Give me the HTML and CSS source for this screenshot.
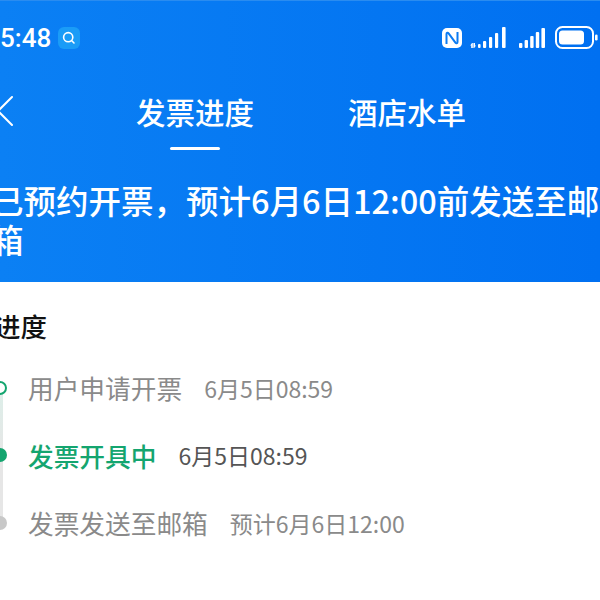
FILE: index.html
```html
<!DOCTYPE html>
<html lang="zh-CN">
<head>
    <meta charset="UTF-8">
    <title>发票进度</title>
    <link rel="stylesheet" href="styles.css">
</head>
<body>
    <div class="screen">
        <div class="header">
            <div class="statusbar">
                <div class="status-left">
                    <span class="clock">5:48</span>
                    <span class="search-badge">
                        <svg width="16" height="16" viewBox="0 0 16 16" fill="none" stroke="#fff" stroke-width="1.6" stroke-linecap="round">
                            <circle cx="7.2" cy="7.2" r="4.6"/>
                            <path d="M10.8 10.8L13 13"/>
                        </svg>
                    </span>
                </div>
                <div class="status-right">
                    <svg class="nfc" width="20" height="20" viewBox="0 0 20 20">
                        <rect x="0" y="0" width="20" height="20" rx="5" fill="#fff"/>
                        <path d="M4.5 16V6C4.5 4.6 5.8 4.4 6.6 5.4L13.4 14.6C14.2 15.6 15.5 15.4 15.5 14V4" fill="none" stroke="#0a7af2" stroke-width="2"/>
                    </svg>
                    <svg class="signal" width="37" height="24" viewBox="0 0 37 24" fill="#fff">
                        <path d="M2 17L0.2 19.5H1.2V22H2.8V17Z"/>
                        <path d="M4.2 22L6 19.5H5V17H3.4V22Z"/>
                        <rect x="8" y="18" width="2.6" height="4" rx="1"/>
                        <rect x="13" y="15" width="3.2" height="7" rx="1"/>
                        <rect x="19" y="11" width="3.2" height="11" rx="1"/>
                        <rect x="25" y="7" width="3.2" height="15" rx="1"/>
                        <rect x="32" y="1" width="3.6" height="21" rx="1"/>
                    </svg>
                    <svg class="signal signal-main" width="26" height="24" viewBox="0 0 26 24" fill="#fff">
                        <rect x="0" y="17" width="3.4" height="5" rx="1"/>
                        <rect x="5.6" y="14" width="3.4" height="8" rx="1"/>
                        <rect x="11.2" y="10" width="3.4" height="12" rx="1"/>
                        <rect x="16.8" y="6" width="3.4" height="16" rx="1"/>
                        <rect x="22.4" y="2" width="3.6" height="20" rx="1"/>
                    </svg>
                    <svg class="battery" width="44" height="24" viewBox="0 0 44 24">
                        <rect x="2" y="1" width="37" height="21" rx="6.5" fill="none" stroke="#fff" stroke-width="2"/>
                        <rect x="5" y="4.5" width="25" height="14" rx="3.5" fill="#fff"/>
                        <rect x="41" y="8.5" width="2.6" height="6" rx="1.3" fill="#fff"/>
                    </svg>
                </div>
            </div>

            <div class="navbar">
                <svg class="back" width="16" height="32" viewBox="0 0 16 32" fill="none" stroke="#fff" stroke-width="2" stroke-linecap="round" stroke-linejoin="round">
                    <path d="M12 2L-2 16L12 30"/>
                </svg>
                <div class="tabs">
                    <div class="tab active">发票进度</div>
                    <div class="tab">酒店水单</div>
                </div>
            </div>

            <div class="notice">已预约开票，预计6月6日12:00前发送至邮箱</div>
        </div>

        <div class="content">
            <h3 class="title">进度</h3>
            <div class="timeline">
                <div class="step done">
                    <span class="dot"></span>
                    <span class="step-name">用户申请开票</span>
                    <span class="step-time">6月5日08:59</span>
                </div>
                <div class="step current">
                    <span class="dot"></span>
                    <span class="step-name">发票开具中</span>
                    <span class="step-time">6月5日08:59</span>
                </div>
                <div class="step todo">
                    <span class="dot"></span>
                    <span class="step-name">发票发送至邮箱</span>
                    <span class="step-time">预计6月6日12:00</span>
                </div>
            </div>
        </div>
    </div>
</body>
</html>
```

FILE: styles.css
```css
html, body {
    margin: 0;
    padding: 0;
    width: 600px;
    height: 600px;
    overflow: hidden;
    background-color: white;
}
body {
    font-family: "Noto Sans CJK SC", "Noto Sans", sans-serif;
}
.screen {
    width: 600px;
    overflow: hidden;
}
.header {
    height: 282px;
    color: white;
    background: linear-gradient(90deg, #0b80f4, #0070f1);
    border-top: 1px solid #2a8cf0;
    box-sizing: border-box;
}
.statusbar {
    height: 74px;
    display: flex;
    justify-content: space-between;
    align-items: center;
}
.status-left {
    display: flex;
    align-items: center;
    gap: 7px;
}
.clock {
    font-family: "Roboto", sans-serif;
    font-size: 26px;
    font-weight: 500;
    line-height: 30px;
}
.search-badge {
    width: 22px;
    height: 22px;
    border-radius: 6px;
    background-color: #1a9cf7;
    display: flex;
    align-items: center;
    justify-content: center;
}
.status-right {
    display: flex;
    align-items: center;
    gap: 8px;
    margin-right: 2px;
}
.signal-main {
    margin-left: 4px;
}
.battery {
    margin-left: 1px;
}
.navbar {
    height: 76px;
    display: flex;
    align-items: center;
}
.back {
    flex-shrink: 0;
    margin-top: -4px;
}
.tabs {
    display: flex;
    gap: 95px;
    margin-left: 120px;
}
.tab {
    position: relative;
    font-size: 29.5px;
    font-weight: 500;
    line-height: 40px;
    width: 117px;
    text-align: center;
    white-space: nowrap;
    margin-top: -4px;
}
.tab.active::after {
    content: "";
    position: absolute;
    left: 34px;
    bottom: -19px;
    width: 50px;
    height: 3px;
    border-radius: 2px;
    background-color: white;
}
.notice {
    margin: 30px -10px 0 -9px;
    font-size: 32.5px;
    font-weight: 500;
    line-height: 38.5px;
}
.title {
    margin: 25px 0 0 -6px;
    font-size: 26.5px;
    font-weight: 500;
    line-height: 38px;
    color: #111;
}
.timeline {
    position: relative;
    margin-top: 24px;
    display: flex;
    flex-direction: column;
    gap: 30.5px;
}
.timeline::before {
    content: "";
    position: absolute;
    left: 0;
    top: 18px;
    bottom: 18px;
    width: 3px;
    background: linear-gradient(180deg, #dcefe9, #e6e6e6 50%);
}
.step {
    position: relative;
    display: flex;
    align-items: center;
    height: 37px;
    padding-left: 28px;
    white-space: nowrap;
}
.dot {
    position: absolute;
    left: -7px;
    top: 11.5px;
    width: 14px;
    height: 14px;
    box-sizing: border-box;
    border-radius: 50%;
}
.step-name {
    font-size: 25.7px;
    color: #8a8a8a;
}
.step-time {
    margin-left: 22px;
    font-size: 23px;
    color: #8a8a8a;
}
.done .dot {
    background-color: white;
    border: 2px solid #14a56f;
}
.current .dot {
    background-color: #14a56f;
}
.current .step-name {
    color: #14a56f;
    font-weight: 500;
}
.current .step-time {
    color: #555;
}
.todo .dot {
    background-color: #c8c8c8;
}
```
